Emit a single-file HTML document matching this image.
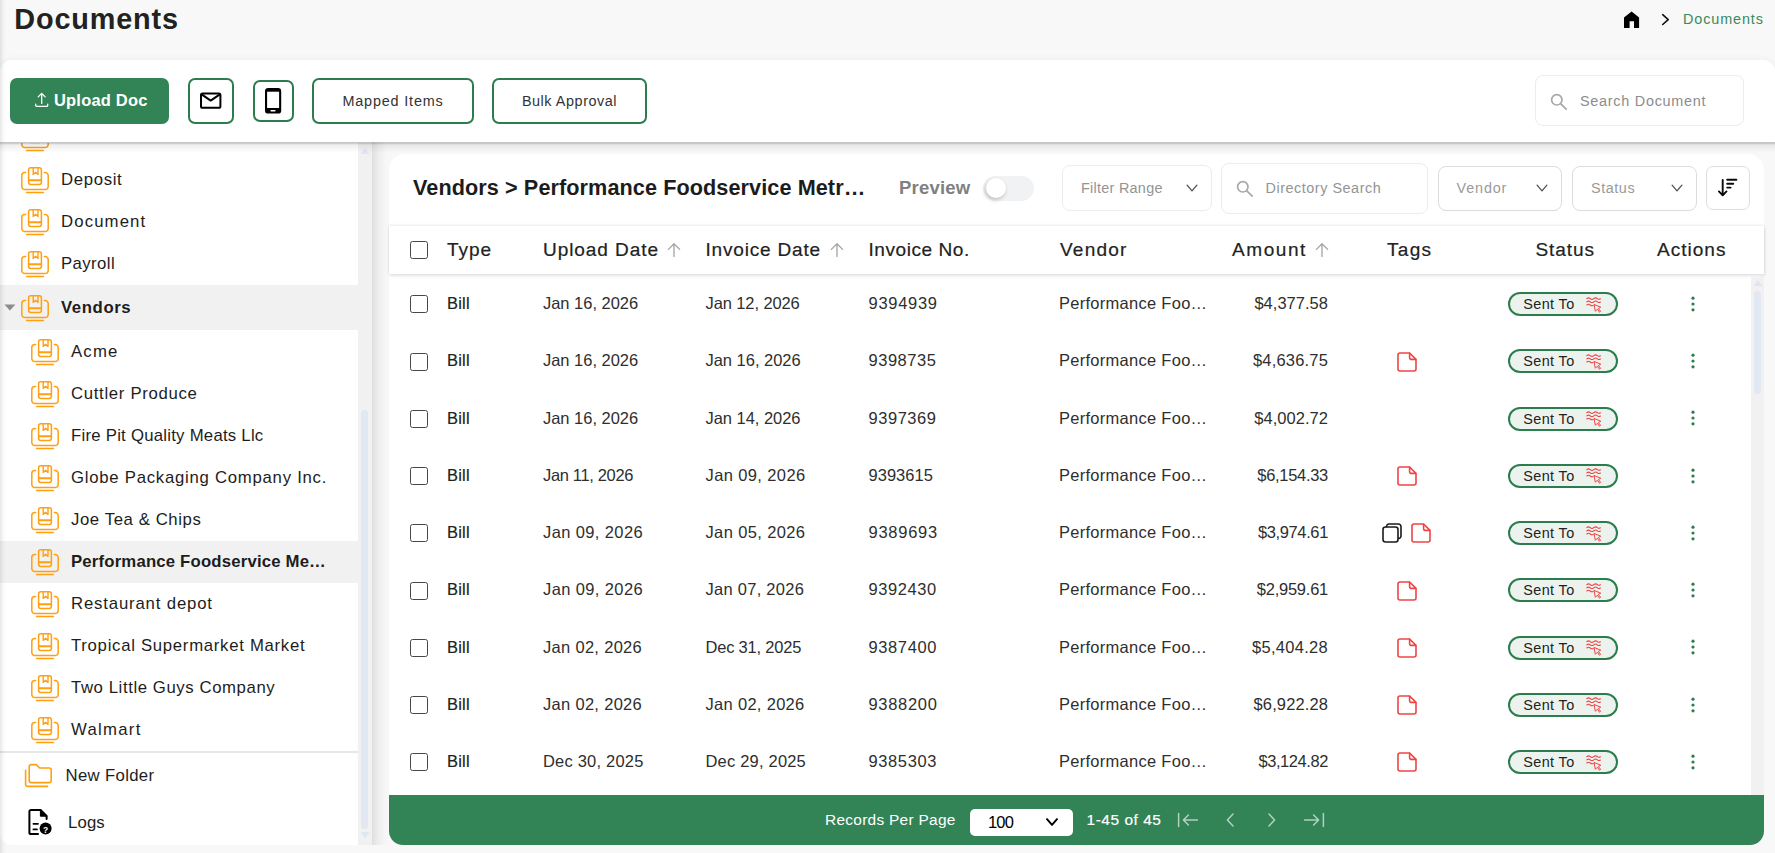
<!DOCTYPE html>
<html lang="en"><head>
<meta charset="utf-8">
<title>Documents</title>
<style>
*{box-sizing:border-box;margin:0;padding:0}
html,body{width:1775px;height:853px;overflow:hidden}
body{background:#f8f8f8;font-family:"Liberation Sans",sans-serif;color:#212121;position:relative}
.abs{position:absolute}
svg{overflow:visible}
.t{position:absolute;white-space:nowrap}
.x{display:inline-block;white-space:nowrap;vertical-align:top;line-height:inherit}
#toolbar{left:0;top:60px;width:1775px;height:82px;background:#fff;border-radius:12px 12px 0 0;box-shadow:0 -2px 6px rgba(0,0,0,.035)}
#upload{left:10px;top:78px;width:159px;height:46px;background:#328356;border-radius:7px}
.obtn{position:absolute;border:2px solid #2c7d4e;border-radius:7px;background:#fff}
.fbox{position:absolute;border:1px solid #e6e6e6;border-radius:8px;background:#fff}
#side{left:0;top:143px;width:358px;height:701.5px;background:#fff;overflow:hidden;border-radius:0 0 0 12px}
.hl{position:absolute;left:0;width:358px;background:#f1f1f1}
#panel{left:389px;top:153.5px;width:1375px;height:691px;background:#fff;border-radius:16px 16px 14px 14px}
#thead{left:389px;top:226px;width:1375px;height:48.3px;background:#fff;box-shadow:0 1.5px 3px .5px rgba(0,0,0,.12),0 -1px 2px 1px rgba(0,0,0,.035)}
#rows{left:0;top:277px;width:1775px;height:518px;overflow:hidden}
#rows>*{margin-top:-277px}
.cb{position:absolute;width:18px;height:18px;border:1.15px solid #474747;border-radius:2.5px;background:#fff}
.pill{position:absolute;width:110px;height:24px;border:2px solid #2c7d4e;border-radius:12px;background:#ecf3ee}
#footer{left:389px;top:795px;width:1375px;height:49.5px;background:#328356;border-radius:0 0 14px 14px}
</style>
</head>
<body>
<div class="t" style="top:-1.3px;height:40px;line-height:40px;left:14.3px;"><span class="x" style="font-size: 28.84px; font-weight: 700; color: rgb(34, 34, 34); letter-spacing: 0.84px;">Documents</span></div>
<svg class="abs" style="left:1622px;top:10px" width="18" height="18" viewBox="0 0 18 18"><path d="M9.6 1.5L2 7.6V17.9H7.6V11.2H12V17.9H17.1V7.6Z" fill="#000"></path></svg>
<svg class="abs" style="left:1658px;top:11px" width="14" height="16" viewBox="0 0 14 16" fill="none" stroke="#111" stroke-width="1.6" stroke-linecap="round" stroke-linejoin="round"><path d="M4.7 3.7L10.2 8.6L4.7 13.5"></path></svg>
<div class="t" style="top:4px;height:30px;line-height:30px;left:1683px;"><span class="x" style="font-size: 14.42px; font-weight: 400; color: rgb(58, 138, 92); letter-spacing: 0.88px;">Documents</span></div>
<div class="abs" id="toolbar"></div>
<div class="abs" id="upload"></div>
<svg class="abs" style="left:34px;top:92px" width="16" height="16" viewBox="0 0 16 16" fill="none" stroke="#fff" stroke-width="1.3" stroke-linecap="round" stroke-linejoin="round"><path d="M7.7 11.4V1.4M4.2 4.9L7.7 1.4L11.2 4.9M1.7 12.2V13.2A1.2 1.2 0 0 0 2.9 14.4H12.5A1.2 1.2 0 0 0 13.7 13.2V12.2"></path></svg>
<div class="t" style="top:84.9px;height:30px;line-height:30px;left:54px;"><span class="x" style="font-size: 16.48px; font-weight: 700; color: rgb(255, 255, 255); letter-spacing: 0.2px;">Upload Doc</span></div>
<div class="obtn" style="left:188px;top:78px;width:46px;height:46px"></div>
<svg class="abs" style="left:199px;top:91px" width="24" height="19" viewBox="0 0 24 19" fill="none" stroke="#000" stroke-width="2" stroke-linejoin="round" stroke-linecap="round"><rect x="2" y="2.4" width="19.4" height="14.4" rx="1.6"></rect><path d="M2.6 3.4L11.7 9.6L20.8 3.4"></path></svg>
<div class="obtn" style="left:253px;top:80px;width:41px;height:42px"></div>
<svg class="abs" style="left:265px;top:88px" width="17" height="26" viewBox="0 0 17 26"><rect x="0" y="0" width="16.2" height="25.6" rx="3.2" fill="#000"></rect><rect x="2.1" y="3.7" width="12" height="16.3" fill="#fff"></rect><rect x="5.4" y="22.000000000000004" width="5.2" height="1.5" rx=".7" fill="#fff"></rect></svg>
<div class="obtn" style="left:312px;top:78px;width:162px;height:46px"></div>
<div class="t" style="top:86px;height:30px;line-height:30px;left:243px;width:300px;text-align:center;"><span class="x" style="font-size: 14.42px; font-weight: 400; color: rgb(51, 51, 51); letter-spacing: 0.83px;">Mapped Items</span></div>
<div class="obtn" style="left:492px;top:78px;width:155px;height:46px"></div>
<div class="t" style="top:86px;height:30px;line-height:30px;left:419.5px;width:300px;text-align:center;"><span class="x" style="font-size: 14.42px; font-weight: 400; color: rgb(51, 51, 51); letter-spacing: 0.55px;">Bulk Approval</span></div>
<div class="fbox" style="left:1535px;top:75.3px;width:209px;height:51.2px;border-color:#ececec"></div>
<svg class="abs" style="left:1550px;top:93px" width="18" height="18" viewBox="0 0 18 18" fill="none" stroke="#a8a8a8" stroke-width="1.7" stroke-linecap="round"><circle cx="6.8" cy="6.8" r="5.2"></circle><path d="M10.8 10.8L16.2 16.2"></path></svg>
<div class="t" style="top:86px;height:30px;line-height:30px;left:1580px;"><span class="x" style="font-size: 14.42px; font-weight: 400; color: rgb(140, 140, 140); letter-spacing: 0.73px;">Search Document</span></div>
<div class="abs" id="side">
<svg class="abs" style="left:21px;top:-18.5px" width="28" height="27" viewBox="0 0 28 27" fill="none" stroke="#ffa012" stroke-width="1.5" stroke-linecap="round" stroke-linejoin="round">
<path d="M4.6 5.6H3.8A3 3 0 0 0 .8 8.600000000000001V19.6A3 3 0 0 0 3.8 22.6H24.2A3 3 0 0 0 27.2 19.6V8.6A3 3 0 0 0 24.2 5.6H23.4"></path>
<path d="M5.6 25.6H22.4"></path>
<rect x="7.6" y=".8" width="12.8" height="16.6" rx="2.2"></rect>
<path d="M8 13.2H20" stroke-width="2"></path>
<path d="M12.2 1V7.4L14.6 5.2L17 7.4V1" stroke-width="1.4"></path>
</svg>
<svg class="abs" style="left:21px;top:23.5px" width="28" height="27" viewBox="0 0 28 27" fill="none" stroke="#ffa012" stroke-width="1.5" stroke-linecap="round" stroke-linejoin="round">
<path d="M4.6 5.6H3.8A3 3 0 0 0 .8 8.600000000000001V19.6A3 3 0 0 0 3.8 22.6H24.2A3 3 0 0 0 27.2 19.6V8.6A3 3 0 0 0 24.2 5.6H23.4"></path>
<path d="M5.6 25.6H22.4"></path>
<rect x="7.6" y=".8" width="12.8" height="16.6" rx="2.2"></rect>
<path d="M8 13.2H20" stroke-width="2"></path>
<path d="M12.2 1V7.4L14.6 5.2L17 7.4V1" stroke-width="1.4"></path>
</svg><div class="t" style="top:21.5px;height:30px;line-height:30px;left:61px;"><span class="x" style="font-size: 16.74px; font-weight: 400; color: rgb(29, 29, 29); letter-spacing: 0.66px;">Deposit</span></div>
<svg class="abs" style="left:21px;top:65.5px" width="28" height="27" viewBox="0 0 28 27" fill="none" stroke="#ffa012" stroke-width="1.5" stroke-linecap="round" stroke-linejoin="round">
<path d="M4.6 5.6H3.8A3 3 0 0 0 .8 8.600000000000001V19.6A3 3 0 0 0 3.8 22.6H24.2A3 3 0 0 0 27.2 19.6V8.6A3 3 0 0 0 24.2 5.6H23.4"></path>
<path d="M5.6 25.6H22.4"></path>
<rect x="7.6" y=".8" width="12.8" height="16.6" rx="2.2"></rect>
<path d="M8 13.2H20" stroke-width="2"></path>
<path d="M12.2 1V7.4L14.6 5.2L17 7.4V1" stroke-width="1.4"></path>
</svg><div class="t" style="top:63.5px;height:30px;line-height:30px;left:61px;"><span class="x" style="font-size: 16.74px; font-weight: 400; color: rgb(29, 29, 29); letter-spacing: 1.13px;">Document</span></div>
<svg class="abs" style="left:21px;top:107.5px" width="28" height="27" viewBox="0 0 28 27" fill="none" stroke="#ffa012" stroke-width="1.5" stroke-linecap="round" stroke-linejoin="round">
<path d="M4.6 5.6H3.8A3 3 0 0 0 .8 8.600000000000001V19.6A3 3 0 0 0 3.8 22.6H24.2A3 3 0 0 0 27.2 19.6V8.6A3 3 0 0 0 24.2 5.6H23.4"></path>
<path d="M5.6 25.6H22.4"></path>
<rect x="7.6" y=".8" width="12.8" height="16.6" rx="2.2"></rect>
<path d="M8 13.2H20" stroke-width="2"></path>
<path d="M12.2 1V7.4L14.6 5.2L17 7.4V1" stroke-width="1.4"></path>
</svg><div class="t" style="top:105.5px;height:30px;line-height:30px;left:61px;"><span class="x" style="font-size: 16.74px; font-weight: 400; color: rgb(29, 29, 29); letter-spacing: 0.41px;">Payroll</span></div>
<div class="hl" style="top:141.95px;height:45.5px"></div><svg class="abs" style="left:21px;top:151.7px" width="28" height="27" viewBox="0 0 28 27" fill="none" stroke="#ffa012" stroke-width="1.5" stroke-linecap="round" stroke-linejoin="round">
<path d="M4.6 5.6H3.8A3 3 0 0 0 .8 8.600000000000001V19.6A3 3 0 0 0 3.8 22.6H24.2A3 3 0 0 0 27.2 19.6V8.6A3 3 0 0 0 24.2 5.6H23.4"></path>
<path d="M5.6 25.6H22.4"></path>
<rect x="7.6" y=".8" width="12.8" height="16.6" rx="2.2"></rect>
<path d="M8 13.2H20" stroke-width="2"></path>
<path d="M12.2 1V7.4L14.6 5.2L17 7.4V1" stroke-width="1.4"></path>
</svg><div class="t" style="top:149.7px;height:30px;line-height:30px;left:61px;"><span class="x" style="font-size: 16.74px; font-weight: 700; color: rgb(29, 29, 29); letter-spacing: 0.6px;">Vendors</span></div>
<svg class="abs" style="left:4px;top:161.4px" width="12" height="8" viewBox="0 0 12 8"><path d="M.4 .6H11.4L5.9 6.6Z" fill="#8c8c8c"></path></svg>
<svg class="abs" style="left:31px;top:195.5px" width="28" height="27" viewBox="0 0 28 27" fill="none" stroke="#ffa012" stroke-width="1.5" stroke-linecap="round" stroke-linejoin="round">
<path d="M4.6 5.6H3.8A3 3 0 0 0 .8 8.600000000000001V19.6A3 3 0 0 0 3.8 22.6H24.2A3 3 0 0 0 27.2 19.6V8.6A3 3 0 0 0 24.2 5.6H23.4"></path>
<path d="M5.6 25.6H22.4"></path>
<rect x="7.6" y=".8" width="12.8" height="16.6" rx="2.2"></rect>
<path d="M8 13.2H20" stroke-width="2"></path>
<path d="M12.2 1V7.4L14.6 5.2L17 7.4V1" stroke-width="1.4"></path>
</svg><div class="t" style="top:193.5px;height:30px;line-height:30px;left:71px;"><span class="x" style="font-size: 16.74px; font-weight: 400; color: rgb(29, 29, 29); letter-spacing: 1.21px;">Acme</span></div>
<svg class="abs" style="left:31px;top:237.5px" width="28" height="27" viewBox="0 0 28 27" fill="none" stroke="#ffa012" stroke-width="1.5" stroke-linecap="round" stroke-linejoin="round">
<path d="M4.6 5.6H3.8A3 3 0 0 0 .8 8.600000000000001V19.6A3 3 0 0 0 3.8 22.6H24.2A3 3 0 0 0 27.2 19.6V8.6A3 3 0 0 0 24.2 5.6H23.4"></path>
<path d="M5.6 25.6H22.4"></path>
<rect x="7.6" y=".8" width="12.8" height="16.6" rx="2.2"></rect>
<path d="M8 13.2H20" stroke-width="2"></path>
<path d="M12.2 1V7.4L14.6 5.2L17 7.4V1" stroke-width="1.4"></path>
</svg><div class="t" style="top:235.5px;height:30px;line-height:30px;left:71px;"><span class="x" style="font-size: 16.74px; font-weight: 400; color: rgb(29, 29, 29); letter-spacing: 0.68px;">Cuttler Produce</span></div>
<svg class="abs" style="left:31px;top:279.5px" width="28" height="27" viewBox="0 0 28 27" fill="none" stroke="#ffa012" stroke-width="1.5" stroke-linecap="round" stroke-linejoin="round">
<path d="M4.6 5.6H3.8A3 3 0 0 0 .8 8.600000000000001V19.6A3 3 0 0 0 3.8 22.6H24.2A3 3 0 0 0 27.2 19.6V8.6A3 3 0 0 0 24.2 5.6H23.4"></path>
<path d="M5.6 25.6H22.4"></path>
<rect x="7.6" y=".8" width="12.8" height="16.6" rx="2.2"></rect>
<path d="M8 13.2H20" stroke-width="2"></path>
<path d="M12.2 1V7.4L14.6 5.2L17 7.4V1" stroke-width="1.4"></path>
</svg><div class="t" style="top:277.5px;height:30px;line-height:30px;left:71px;"><span class="x" style="font-size: 16.74px; font-weight: 400; color: rgb(29, 29, 29); letter-spacing: 0.25px;">Fire Pit Quality Meats Llc</span></div>
<svg class="abs" style="left:31px;top:321.5px" width="28" height="27" viewBox="0 0 28 27" fill="none" stroke="#ffa012" stroke-width="1.5" stroke-linecap="round" stroke-linejoin="round">
<path d="M4.6 5.6H3.8A3 3 0 0 0 .8 8.600000000000001V19.6A3 3 0 0 0 3.8 22.6H24.2A3 3 0 0 0 27.2 19.6V8.6A3 3 0 0 0 24.2 5.6H23.4"></path>
<path d="M5.6 25.6H22.4"></path>
<rect x="7.6" y=".8" width="12.8" height="16.6" rx="2.2"></rect>
<path d="M8 13.2H20" stroke-width="2"></path>
<path d="M12.2 1V7.4L14.6 5.2L17 7.4V1" stroke-width="1.4"></path>
</svg><div class="t" style="top:319.5px;height:30px;line-height:30px;left:71px;"><span class="x" style="font-size: 16.74px; font-weight: 400; color: rgb(29, 29, 29); letter-spacing: 0.74px;">Globe Packaging Company Inc.</span></div>
<svg class="abs" style="left:31px;top:363.5px" width="28" height="27" viewBox="0 0 28 27" fill="none" stroke="#ffa012" stroke-width="1.5" stroke-linecap="round" stroke-linejoin="round">
<path d="M4.6 5.6H3.8A3 3 0 0 0 .8 8.600000000000001V19.6A3 3 0 0 0 3.8 22.6H24.2A3 3 0 0 0 27.2 19.6V8.6A3 3 0 0 0 24.2 5.6H23.4"></path>
<path d="M5.6 25.6H22.4"></path>
<rect x="7.6" y=".8" width="12.8" height="16.6" rx="2.2"></rect>
<path d="M8 13.2H20" stroke-width="2"></path>
<path d="M12.2 1V7.4L14.6 5.2L17 7.4V1" stroke-width="1.4"></path>
</svg><div class="t" style="top:361.5px;height:30px;line-height:30px;left:71px;"><span class="x" style="font-size: 16.74px; font-weight: 400; color: rgb(29, 29, 29); letter-spacing: 0.59px;">Joe Tea &amp; Chips</span></div>
<div class="hl" style="top:397.5px;height:42px"></div><svg class="abs" style="left:31px;top:405.5px" width="28" height="27" viewBox="0 0 28 27" fill="none" stroke="#ffa012" stroke-width="1.5" stroke-linecap="round" stroke-linejoin="round">
<path d="M4.6 5.6H3.8A3 3 0 0 0 .8 8.600000000000001V19.6A3 3 0 0 0 3.8 22.6H24.2A3 3 0 0 0 27.2 19.6V8.6A3 3 0 0 0 24.2 5.6H23.4"></path>
<path d="M5.6 25.6H22.4"></path>
<rect x="7.6" y=".8" width="12.8" height="16.6" rx="2.2"></rect>
<path d="M8 13.2H20" stroke-width="2"></path>
<path d="M12.2 1V7.4L14.6 5.2L17 7.4V1" stroke-width="1.4"></path>
</svg><div class="t" style="top:403.5px;height:30px;line-height:30px;left:71px;"><span class="x" style="font-size: 16.74px; font-weight: 700; color: rgb(29, 29, 29); letter-spacing: 0.18px;">Performance Foodservice Me…</span></div>
<svg class="abs" style="left:31px;top:447.5px" width="28" height="27" viewBox="0 0 28 27" fill="none" stroke="#ffa012" stroke-width="1.5" stroke-linecap="round" stroke-linejoin="round">
<path d="M4.6 5.6H3.8A3 3 0 0 0 .8 8.600000000000001V19.6A3 3 0 0 0 3.8 22.6H24.2A3 3 0 0 0 27.2 19.6V8.6A3 3 0 0 0 24.2 5.6H23.4"></path>
<path d="M5.6 25.6H22.4"></path>
<rect x="7.6" y=".8" width="12.8" height="16.6" rx="2.2"></rect>
<path d="M8 13.2H20" stroke-width="2"></path>
<path d="M12.2 1V7.4L14.6 5.2L17 7.4V1" stroke-width="1.4"></path>
</svg><div class="t" style="top:445.5px;height:30px;line-height:30px;left:71px;"><span class="x" style="font-size: 16.74px; font-weight: 400; color: rgb(29, 29, 29); letter-spacing: 0.84px;">Restaurant depot</span></div>
<svg class="abs" style="left:31px;top:489.5px" width="28" height="27" viewBox="0 0 28 27" fill="none" stroke="#ffa012" stroke-width="1.5" stroke-linecap="round" stroke-linejoin="round">
<path d="M4.6 5.6H3.8A3 3 0 0 0 .8 8.600000000000001V19.6A3 3 0 0 0 3.8 22.6H24.2A3 3 0 0 0 27.2 19.6V8.6A3 3 0 0 0 24.2 5.6H23.4"></path>
<path d="M5.6 25.6H22.4"></path>
<rect x="7.6" y=".8" width="12.8" height="16.6" rx="2.2"></rect>
<path d="M8 13.2H20" stroke-width="2"></path>
<path d="M12.2 1V7.4L14.6 5.2L17 7.4V1" stroke-width="1.4"></path>
</svg><div class="t" style="top:487.5px;height:30px;line-height:30px;left:71px;"><span class="x" style="font-size: 16.74px; font-weight: 400; color: rgb(29, 29, 29); letter-spacing: 0.71px;">Tropical Supermarket Market</span></div>
<svg class="abs" style="left:31px;top:531.5px" width="28" height="27" viewBox="0 0 28 27" fill="none" stroke="#ffa012" stroke-width="1.5" stroke-linecap="round" stroke-linejoin="round">
<path d="M4.6 5.6H3.8A3 3 0 0 0 .8 8.600000000000001V19.6A3 3 0 0 0 3.8 22.6H24.2A3 3 0 0 0 27.2 19.6V8.6A3 3 0 0 0 24.2 5.6H23.4"></path>
<path d="M5.6 25.6H22.4"></path>
<rect x="7.6" y=".8" width="12.8" height="16.6" rx="2.2"></rect>
<path d="M8 13.2H20" stroke-width="2"></path>
<path d="M12.2 1V7.4L14.6 5.2L17 7.4V1" stroke-width="1.4"></path>
</svg><div class="t" style="top:529.5px;height:30px;line-height:30px;left:71px;"><span class="x" style="font-size: 16.74px; font-weight: 400; color: rgb(29, 29, 29); letter-spacing: 0.59px;">Two Little Guys Company</span></div>
<svg class="abs" style="left:31px;top:573.5px" width="28" height="27" viewBox="0 0 28 27" fill="none" stroke="#ffa012" stroke-width="1.5" stroke-linecap="round" stroke-linejoin="round">
<path d="M4.6 5.6H3.8A3 3 0 0 0 .8 8.600000000000001V19.6A3 3 0 0 0 3.8 22.6H24.2A3 3 0 0 0 27.2 19.6V8.6A3 3 0 0 0 24.2 5.6H23.4"></path>
<path d="M5.6 25.6H22.4"></path>
<rect x="7.6" y=".8" width="12.8" height="16.6" rx="2.2"></rect>
<path d="M8 13.2H20" stroke-width="2"></path>
<path d="M12.2 1V7.4L14.6 5.2L17 7.4V1" stroke-width="1.4"></path>
</svg><div class="t" style="top:571.5px;height:30px;line-height:30px;left:71px;"><span class="x" style="font-size: 16.74px; font-weight: 400; color: rgb(29, 29, 29); letter-spacing: 1.27px;">Walmart</span></div>
<div class="abs" style="left:0;top:608px;width:358px;height:2px;background:#e6e6e6"></div>
<svg class="abs" style="left:24px;top:620px" width="29" height="25" viewBox="0 0 29 25" fill="none" stroke="#ffa012" stroke-width="1.6" stroke-linecap="round" stroke-linejoin="round"><path d="M7.2 1.6H12.4L15.6 5H25.2A2 2 0 0 1 27.2 7V17.6A2 2 0 0 1 25.2 19.6H7.2A2 2 0 0 1 5.2 17.6V3.6A2 2 0 0 1 7.2 1.6Z"></path><path d="M1.6 7.4V21.4A2 2 0 0 0 3.6 23.4H23.6"></path></svg>
<div class="t" style="top:618.3px;height:30px;line-height:30px;left:65.5px;"><span class="x" style="font-size: 16.74px; font-weight: 400; color: rgb(29, 29, 29); letter-spacing: 0.33px;">New Folder</span></div>
<svg class="abs" style="left:27px;top:665px" width="27" height="28" viewBox="0 0 27 28" fill="none" stroke="#000" stroke-width="2" stroke-linecap="round" stroke-linejoin="round"><path d="M11 26H4A1.6 1.6 0 0 1 2.4 24.4V3.6A1.6 1.6 0 0 1 4 2H13.6L19.6 8V11"></path><path d="M13.4 2.2V8.2H19.4Z" fill="#000" stroke-width="1"></path><path d="M6.4 15.8H11M6.4 21.4H10" stroke-width="1.7"></path><circle cx="18.6" cy="20.4" r="6" fill="#000" stroke="none"></circle></svg>
<div class="t" style="left:41.6px;top:676.4px;height:18px;line-height:18px;width:8px;text-align:center"><span style="font-size:8.5px;font-weight:700;color:#fff">?</span></div>
<div class="t" style="top:664.6px;height:30px;line-height:30px;left:68px;"><span class="x" style="font-size: 16.74px; font-weight: 400; color: rgb(29, 29, 29); letter-spacing: 0.15px;">Logs</span></div>
</div>
<div class="abs" style="left:358px;top:142px;width:13.5px;height:702.5px;background:#f1f1f2"></div>
<div class="abs" style="left:361px;top:410px;width:7px;height:419px;border-radius:4px;background:#e2e8f1"></div>
<svg class="abs" style="left:360px;top:147px" width="10" height="8" viewBox="0 0 10 8"><path d="M5 1L9.4 7H.6Z" fill="#dfe6f1"></path></svg>
<svg class="abs" style="left:360px;top:831px" width="10" height="8" viewBox="0 0 10 8"><path d="M5 7L9.4 1H.6Z" fill="#dfe6f1"></path></svg>
<div class="abs" style="left:371.5px;top:142px;width:17.5px;height:702.5px;background:linear-gradient(90deg,#dfdfdf,#ededed 35%,#f5f5f5 70%,#f8f8f8)"></div>
<div class="abs" style="left:0;top:142px;width:1775px;height:11px;background:linear-gradient(180deg,rgba(0,0,0,.2),rgba(0,0,0,.19) 17%,rgba(0,0,0,.065) 25%,rgba(0,0,0,.03) 65%,rgba(0,0,0,0))"></div>
<div class="abs" id="panel"></div>
<div class="t" style="top:170.5px;height:34px;line-height:34px;left:413px;"><span class="x" style="font-size: 21.63px; font-weight: 700; color: rgb(28, 28, 28); letter-spacing: 0.09px;">Vendors &gt; Performance Foodservice Metr…</span></div>
<div class="t" style="top:172.5px;height:30px;line-height:30px;left:899px;"><span class="x" style="font-size: 18.54px; font-weight: 700; color: rgb(128, 128, 128); letter-spacing: 0.19px;">Preview</span></div>
<div class="abs" style="left:982.5px;top:176px;width:51px;height:24.5px;border-radius:13px;background:#f0f2f4"></div>
<div class="abs" style="left:986px;top:178.2px;width:20px;height:20px;border-radius:10px;background:#fff;box-shadow:-1px 2px 4px rgba(0,0,0,.22)"></div>
<div class="fbox" style="left:1062px;top:165px;width:150px;height:46px;border-color:#ececec"></div>
<div class="t" style="top:173px;height:30px;line-height:30px;left:1081px;"><span class="x" style="font-size: 14.42px; font-weight: 400; color: rgb(148, 148, 148); letter-spacing: 0.27px;">Filter Range</span></div>
<svg class="abs" style="left:1184.3px;top:180.3px" width="16" height="16" viewBox="-8 -8 16 16" fill="none" stroke="#555" stroke-width="1.35" stroke-linecap="round" stroke-linejoin="round"><path d="M-4.9 -2.842L0 2.842L4.9 -2.842"></path></svg>
<div class="fbox" style="left:1221px;top:162.5px;width:206.5px;height:51.5px;border-color:#ececec"></div>
<svg class="abs" style="left:1235.5px;top:179.5px" width="18" height="18" viewBox="0 0 18 18" fill="none" stroke="#a8a8a8" stroke-width="1.7" stroke-linecap="round"><circle cx="6.8" cy="6.8" r="5.2"></circle><path d="M10.8 10.8L16.2 16.2"></path></svg>
<div class="t" style="top:173px;height:30px;line-height:30px;left:1265.5px;"><span class="x" style="font-size: 14.42px; font-weight: 400; color: rgb(148, 148, 148); letter-spacing: 0.53px;">Directory Search</span></div>
<div class="fbox" style="left:1437.5px;top:165.5px;width:124.5px;height:45px;border-color:#dcdcdc"></div>
<div class="t" style="top:173px;height:30px;line-height:30px;left:1456.5px;"><span class="x" style="font-size: 14.42px; font-weight: 400; color: rgb(154, 154, 154); letter-spacing: 0.85px;">Vendor</span></div>
<svg class="abs" style="left:1534.3px;top:180.3px" width="16" height="16" viewBox="-8 -8 16 16" fill="none" stroke="#555" stroke-width="1.35" stroke-linecap="round" stroke-linejoin="round"><path d="M-4.9 -2.842L0 2.842L4.9 -2.842"></path></svg>
<div class="fbox" style="left:1572px;top:165.5px;width:125px;height:45px;border-color:#dcdcdc"></div>
<div class="t" style="top:173px;height:30px;line-height:30px;left:1591px;"><span class="x" style="font-size: 14.42px; font-weight: 400; color: rgb(154, 154, 154); letter-spacing: 0.55px;">Status</span></div>
<svg class="abs" style="left:1669.4px;top:180.3px" width="16" height="16" viewBox="-8 -8 16 16" fill="none" stroke="#555" stroke-width="1.35" stroke-linecap="round" stroke-linejoin="round"><path d="M-4.9 -2.842L0 2.842L4.9 -2.842"></path></svg>
<div class="fbox" style="left:1705.5px;top:166px;width:44.5px;height:44px;border-color:#dedede;border-radius:7px"></div>
<svg class="abs" style="left:1716px;top:177px" width="24" height="21" viewBox="0 0 24 21" fill="none" stroke="#0a0a0a" stroke-width="1.9" stroke-linecap="round" stroke-linejoin="round"><path d="M6.7 3V18M2.9 14.4L6.7 18.3L10.5 14.4M11.2 2.8H20.4M11.2 6.7H17.2M11.2 10.6H14.6"></path></svg>
<div class="abs" id="thead"></div>
<div class="cb" style="left:410px;top:241px"></div>
<div class="t" style="top:235px;height:30px;line-height:30px;left:447px;"><span class="x" style="font-size: 19.06px; font-weight: 400; color: rgb(34, 34, 34); -webkit-text-stroke: 0.2px; letter-spacing: 0.97px;">Type</span></div>
<div class="t" style="top:235px;height:30px;line-height:30px;left:543px;"><span class="x" style="font-size: 19.06px; font-weight: 400; color: rgb(34, 34, 34); -webkit-text-stroke: 0.2px; letter-spacing: 0.91px;">Upload Date</span></div>
<svg class="abs" style="left:665.5px;top:242.3px" width="16" height="16" viewBox="-8 -8 16 16" fill="none" stroke="#a4a4a4" stroke-width="1.3" stroke-linecap="round" stroke-linejoin="round"><path d="M0 6.4V-6.2M-5.6 -.6L0 -6.2L5.6 -.6"></path></svg>
<div class="t" style="top:235px;height:30px;line-height:30px;left:705.5px;"><span class="x" style="font-size: 19.06px; font-weight: 400; color: rgb(34, 34, 34); -webkit-text-stroke: 0.2px; letter-spacing: 0.8px;">Invoice Date</span></div>
<svg class="abs" style="left:828.5px;top:242.3px" width="16" height="16" viewBox="-8 -8 16 16" fill="none" stroke="#a4a4a4" stroke-width="1.3" stroke-linecap="round" stroke-linejoin="round"><path d="M0 6.4V-6.2M-5.6 -.6L0 -6.2L5.6 -.6"></path></svg>
<div class="t" style="top:235px;height:30px;line-height:30px;left:868.5px;"><span class="x" style="font-size: 19.06px; font-weight: 400; color: rgb(34, 34, 34); -webkit-text-stroke: 0.2px; letter-spacing: 0.54px;">Invoice No.</span></div>
<div class="t" style="top:235px;height:30px;line-height:30px;left:1060px;"><span class="x" style="font-size: 19.06px; font-weight: 400; color: rgb(34, 34, 34); -webkit-text-stroke: 0.2px; letter-spacing: 1.22px;">Vendor</span></div>
<div class="t" style="top:235px;height:30px;line-height:30px;left:1232px;"><span class="x" style="font-size: 19.06px; font-weight: 400; color: rgb(34, 34, 34); -webkit-text-stroke: 0.2px; letter-spacing: 1.53px;">Amount</span></div>
<svg class="abs" style="left:1313.5px;top:242.3px" width="16" height="16" viewBox="-8 -8 16 16" fill="none" stroke="#a4a4a4" stroke-width="1.3" stroke-linecap="round" stroke-linejoin="round"><path d="M0 6.4V-6.2M-5.6 -.6L0 -6.2L5.6 -.6"></path></svg>
<div class="t" style="top:235px;height:30px;line-height:30px;left:1387px;"><span class="x" style="font-size: 19.06px; font-weight: 400; color: rgb(34, 34, 34); -webkit-text-stroke: 0.2px; letter-spacing: 1.29px;">Tags</span></div>
<div class="t" style="top:235px;height:30px;line-height:30px;left:1535.5px;"><span class="x" style="font-size: 19.06px; font-weight: 400; color: rgb(34, 34, 34); -webkit-text-stroke: 0.2px; letter-spacing: 0.9px;">Status</span></div>
<div class="t" style="top:235px;height:30px;line-height:30px;left:1657px;"><span class="x" style="font-size: 19.06px; font-weight: 400; color: rgb(34, 34, 34); -webkit-text-stroke: 0.2px; letter-spacing: 1px;">Actions</span></div>
<div class="abs" id="rows">
<div class="cb" style="left:410px;top:295px"></div>
<div class="t" style="top:288.1px;height:30px;line-height:30px;left:447px;"><span class="x" style="font-size: 16.48px; font-weight: 400; color: rgb(34, 34, 34); -webkit-text-stroke: 0.2px; letter-spacing: 0.2px;">Bill</span></div>
<div class="t" style="top:288.1px;height:30px;line-height:30px;left:543px;"><span class="x" style="font-size: 16.48px; font-weight: 400; color: rgb(46, 46, 46); letter-spacing: -0.01px;">Jan 16, 2026</span></div>
<div class="t" style="top:288.1px;height:30px;line-height:30px;left:705.5px;"><span class="x" style="font-size: 16.48px; font-weight: 400; color: rgb(46, 46, 46); letter-spacing: -0.09px;">Jan 12, 2026</span></div>
<div class="t" style="top:288.1px;height:30px;line-height:30px;left:868.5px;"><span class="x" style="font-size: 16.48px; font-weight: 400; color: rgb(46, 46, 46); letter-spacing: 0.73px;">9394939</span></div>
<div class="t" style="top:288.1px;height:30px;line-height:30px;left:1059px;"><span class="x" style="font-size: 16.48px; font-weight: 400; color: rgb(46, 46, 46); letter-spacing: 0.29px;">Performance Foo…</span></div>
<div class="t" style="top:288.1px;height:30px;line-height:30px;right:447px;"><span class="x" style="font-size: 16.48px; font-weight: 400; color: rgb(46, 46, 46); letter-spacing: 0.04px;">$4,377.58</span></div>
<div class="pill" style="left:1508px;top:292px"></div>
<div class="t" style="top:289px;height:30px;line-height:30px;left:1523.3px;"><span class="x" style="font-size: 14.42px; font-weight: 400; color: rgb(34, 34, 34); letter-spacing: 0.38px;">Sent To</span></div>
<svg class="abs" style="left:1586px;top:296.7px" width="16" height="16" viewBox="0 0 16 16" fill="none" stroke="#ef4444" stroke-width="1.1" stroke-linecap="round" stroke-linejoin="round">
<path d="M.8 1.6C2 .6 3 .6 4.2 1.6S6.6 2.6 7.8 1.6S10.200000000000001 .6 11.4 1.6S13.6 2.4 14.4 1.8"></path>
<path d="M.8 4.8C2 3.8 3 3.8 4.2 4.8S6.6 5.8 7.8 4.8S10.200000000000001 3.8 11.4 4.8S13.6 5.6 14.4 5"></path>
<path d="M.8 8C2 7 3 7 4.2 8S6.2 8.9 7.2 8.4"></path>
<path d="M8.4 7.6L14.8 10.200000000000001L12.4 11.4L14.600000000000001 14.4L13.4 15.200000000000001L11.4 12.2L9.6 14Z" stroke-width="1"></path>
</svg>
<svg class="abs" style="left:1689px;top:293.9px" width="8" height="20" viewBox="0 0 8 20" fill="#2c7d4e"><circle cx="4" cy="4.2" r="1.6"></circle><circle cx="4" cy="10" r="1.6"></circle><circle cx="4" cy="15.8" r="1.6"></circle></svg>
<div class="cb" style="left:410px;top:353px"></div>
<div class="t" style="top:345.35px;height:30px;line-height:30px;left:447px;"><span class="x" style="font-size: 16.48px; font-weight: 400; color: rgb(34, 34, 34); -webkit-text-stroke: 0.2px; letter-spacing: 0.2px;">Bill</span></div>
<div class="t" style="top:345.35px;height:30px;line-height:30px;left:543px;"><span class="x" style="font-size: 16.48px; font-weight: 400; color: rgb(46, 46, 46); letter-spacing: -0.01px;">Jan 16, 2026</span></div>
<div class="t" style="top:345.35px;height:30px;line-height:30px;left:705.5px;"><span class="x" style="font-size: 16.48px; font-weight: 400; color: rgb(46, 46, 46); letter-spacing: -0.01px;">Jan 16, 2026</span></div>
<div class="t" style="top:345.35px;height:30px;line-height:30px;left:868.5px;"><span class="x" style="font-size: 16.48px; font-weight: 400; color: rgb(46, 46, 46); letter-spacing: 0.54px;">9398735</span></div>
<div class="t" style="top:345.35px;height:30px;line-height:30px;left:1059px;"><span class="x" style="font-size: 16.48px; font-weight: 400; color: rgb(46, 46, 46); letter-spacing: 0.29px;">Performance Foo…</span></div>
<div class="t" style="top:345.35px;height:30px;line-height:30px;right:447px;"><span class="x" style="font-size: 16.48px; font-weight: 400; color: rgb(46, 46, 46); letter-spacing: 0.2px;">$4,636.75</span></div>
<svg class="abs" style="left:1396.5px;top:351.65px" width="20" height="20" viewBox="0 0 20 20" fill="none" stroke="#ef4444" stroke-width="1.6" stroke-linejoin="round" stroke-linecap="round">
<path d="M3 1H12.6L19 7.4V17A2 2 0 0 1 17 19H3A2 2 0 0 1 1 17V3A2 2 0 0 1 3 1Z"></path><path d="M12.6 1.4V5.4A2 2 0 0 0 14.6 7.4H18.6"></path></svg>
<div class="pill" style="left:1508px;top:349px"></div>
<div class="t" style="top:346.25px;height:30px;line-height:30px;left:1523.3px;"><span class="x" style="font-size: 14.42px; font-weight: 400; color: rgb(34, 34, 34); letter-spacing: 0.38px;">Sent To</span></div>
<svg class="abs" style="left:1586px;top:353.95px" width="16" height="16" viewBox="0 0 16 16" fill="none" stroke="#ef4444" stroke-width="1.1" stroke-linecap="round" stroke-linejoin="round">
<path d="M.8 1.6C2 .6 3 .6 4.2 1.6S6.6 2.6 7.8 1.6S10.200000000000001 .6 11.4 1.6S13.6 2.4 14.4 1.8"></path>
<path d="M.8 4.8C2 3.8 3 3.8 4.2 4.8S6.6 5.8 7.8 4.8S10.200000000000001 3.8 11.4 4.8S13.6 5.6 14.4 5"></path>
<path d="M.8 8C2 7 3 7 4.2 8S6.2 8.9 7.2 8.4"></path>
<path d="M8.4 7.6L14.8 10.200000000000001L12.4 11.4L14.600000000000001 14.4L13.4 15.200000000000001L11.4 12.2L9.6 14Z" stroke-width="1"></path>
</svg>
<svg class="abs" style="left:1689px;top:351.15px" width="8" height="20" viewBox="0 0 8 20" fill="#2c7d4e"><circle cx="4" cy="4.2" r="1.6"></circle><circle cx="4" cy="10" r="1.6"></circle><circle cx="4" cy="15.8" r="1.6"></circle></svg>
<div class="cb" style="left:410px;top:410px"></div>
<div class="t" style="top:402.6px;height:30px;line-height:30px;left:447px;"><span class="x" style="font-size: 16.48px; font-weight: 400; color: rgb(34, 34, 34); -webkit-text-stroke: 0.2px; letter-spacing: 0.2px;">Bill</span></div>
<div class="t" style="top:402.6px;height:30px;line-height:30px;left:543px;"><span class="x" style="font-size: 16.48px; font-weight: 400; color: rgb(46, 46, 46); letter-spacing: -0.01px;">Jan 16, 2026</span></div>
<div class="t" style="top:402.6px;height:30px;line-height:30px;left:705.5px;"><span class="x" style="font-size: 16.48px; font-weight: 400; color: rgb(46, 46, 46); letter-spacing: -0.02px;">Jan 14, 2026</span></div>
<div class="t" style="top:402.6px;height:30px;line-height:30px;left:868.5px;"><span class="x" style="font-size: 16.48px; font-weight: 400; color: rgb(46, 46, 46); letter-spacing: 0.55px;">9397369</span></div>
<div class="t" style="top:402.6px;height:30px;line-height:30px;left:1059px;"><span class="x" style="font-size: 16.48px; font-weight: 400; color: rgb(46, 46, 46); letter-spacing: 0.29px;">Performance Foo…</span></div>
<div class="t" style="top:402.6px;height:30px;line-height:30px;right:447px;"><span class="x" style="font-size: 16.48px; font-weight: 400; color: rgb(46, 46, 46); letter-spacing: 0.06px;">$4,002.72</span></div>
<div class="pill" style="left:1508px;top:407px"></div>
<div class="t" style="top:403.5px;height:30px;line-height:30px;left:1523.3px;"><span class="x" style="font-size: 14.42px; font-weight: 400; color: rgb(34, 34, 34); letter-spacing: 0.38px;">Sent To</span></div>
<svg class="abs" style="left:1586px;top:411.2px" width="16" height="16" viewBox="0 0 16 16" fill="none" stroke="#ef4444" stroke-width="1.1" stroke-linecap="round" stroke-linejoin="round">
<path d="M.8 1.6C2 .6 3 .6 4.2 1.6S6.6 2.6 7.8 1.6S10.200000000000001 .6 11.4 1.6S13.6 2.4 14.4 1.8"></path>
<path d="M.8 4.8C2 3.8 3 3.8 4.2 4.8S6.6 5.8 7.8 4.8S10.200000000000001 3.8 11.4 4.8S13.6 5.6 14.4 5"></path>
<path d="M.8 8C2 7 3 7 4.2 8S6.2 8.9 7.2 8.4"></path>
<path d="M8.4 7.6L14.8 10.200000000000001L12.4 11.4L14.600000000000001 14.4L13.4 15.200000000000001L11.4 12.2L9.6 14Z" stroke-width="1"></path>
</svg>
<svg class="abs" style="left:1689px;top:408.4px" width="8" height="20" viewBox="0 0 8 20" fill="#2c7d4e"><circle cx="4" cy="4.2" r="1.6"></circle><circle cx="4" cy="10" r="1.6"></circle><circle cx="4" cy="15.8" r="1.6"></circle></svg>
<div class="cb" style="left:410px;top:467px"></div>
<div class="t" style="top:459.85px;height:30px;line-height:30px;left:447px;"><span class="x" style="font-size: 16.48px; font-weight: 400; color: rgb(34, 34, 34); -webkit-text-stroke: 0.2px; letter-spacing: 0.2px;">Bill</span></div>
<div class="t" style="top:459.85px;height:30px;line-height:30px;left:543px;"><span class="x" style="font-size: 16.48px; font-weight: 400; color: rgb(46, 46, 46); letter-spacing: -0.33px;">Jan 11, 2026</span></div>
<div class="t" style="top:459.85px;height:30px;line-height:30px;left:705.5px;"><span class="x" style="font-size: 16.48px; font-weight: 400; color: rgb(46, 46, 46); letter-spacing: 0.4px;">Jan 09, 2026</span></div>
<div class="t" style="top:459.85px;height:30px;line-height:30px;left:868.5px;"><span class="x" style="font-size: 16.48px; font-weight: 400; color: rgb(46, 46, 46); letter-spacing: 0.03px;">9393615</span></div>
<div class="t" style="top:459.85px;height:30px;line-height:30px;left:1059px;"><span class="x" style="font-size: 16.48px; font-weight: 400; color: rgb(46, 46, 46); letter-spacing: 0.29px;">Performance Foo…</span></div>
<div class="t" style="top:459.85px;height:30px;line-height:30px;right:447px;"><span class="x" style="font-size: 16.48px; font-weight: 400; color: rgb(46, 46, 46); letter-spacing: -0.28px;">$6,154.33</span></div>
<svg class="abs" style="left:1396.5px;top:466.15px" width="20" height="20" viewBox="0 0 20 20" fill="none" stroke="#ef4444" stroke-width="1.6" stroke-linejoin="round" stroke-linecap="round">
<path d="M3 1H12.6L19 7.4V17A2 2 0 0 1 17 19H3A2 2 0 0 1 1 17V3A2 2 0 0 1 3 1Z"></path><path d="M12.6 1.4V5.4A2 2 0 0 0 14.6 7.4H18.6"></path></svg>
<div class="pill" style="left:1508px;top:464px"></div>
<div class="t" style="top:460.75px;height:30px;line-height:30px;left:1523.3px;"><span class="x" style="font-size: 14.42px; font-weight: 400; color: rgb(34, 34, 34); letter-spacing: 0.38px;">Sent To</span></div>
<svg class="abs" style="left:1586px;top:468.45px" width="16" height="16" viewBox="0 0 16 16" fill="none" stroke="#ef4444" stroke-width="1.1" stroke-linecap="round" stroke-linejoin="round">
<path d="M.8 1.6C2 .6 3 .6 4.2 1.6S6.6 2.6 7.8 1.6S10.200000000000001 .6 11.4 1.6S13.6 2.4 14.4 1.8"></path>
<path d="M.8 4.8C2 3.8 3 3.8 4.2 4.8S6.6 5.8 7.8 4.8S10.200000000000001 3.8 11.4 4.8S13.6 5.6 14.4 5"></path>
<path d="M.8 8C2 7 3 7 4.2 8S6.2 8.9 7.2 8.4"></path>
<path d="M8.4 7.6L14.8 10.200000000000001L12.4 11.4L14.600000000000001 14.4L13.4 15.200000000000001L11.4 12.2L9.6 14Z" stroke-width="1"></path>
</svg>
<svg class="abs" style="left:1689px;top:465.65px" width="8" height="20" viewBox="0 0 8 20" fill="#2c7d4e"><circle cx="4" cy="4.2" r="1.6"></circle><circle cx="4" cy="10" r="1.6"></circle><circle cx="4" cy="15.8" r="1.6"></circle></svg>
<div class="cb" style="left:410px;top:524px"></div>
<div class="t" style="top:517.1px;height:30px;line-height:30px;left:447px;"><span class="x" style="font-size: 16.48px; font-weight: 400; color: rgb(34, 34, 34); -webkit-text-stroke: 0.2px; letter-spacing: 0.2px;">Bill</span></div>
<div class="t" style="top:517.1px;height:30px;line-height:30px;left:543px;"><span class="x" style="font-size: 16.48px; font-weight: 400; color: rgb(46, 46, 46); letter-spacing: 0.4px;">Jan 09, 2026</span></div>
<div class="t" style="top:517.1px;height:30px;line-height:30px;left:705.5px;"><span class="x" style="font-size: 16.48px; font-weight: 400; color: rgb(46, 46, 46); letter-spacing: 0.39px;">Jan 05, 2026</span></div>
<div class="t" style="top:517.1px;height:30px;line-height:30px;left:868.5px;"><span class="x" style="font-size: 16.48px; font-weight: 400; color: rgb(46, 46, 46); letter-spacing: 0.75px;">9389693</span></div>
<div class="t" style="top:517.1px;height:30px;line-height:30px;left:1059px;"><span class="x" style="font-size: 16.48px; font-weight: 400; color: rgb(46, 46, 46); letter-spacing: 0.29px;">Performance Foo…</span></div>
<div class="t" style="top:517.1px;height:30px;line-height:30px;right:447px;"><span class="x" style="font-size: 16.48px; font-weight: 400; color: rgb(46, 46, 46); letter-spacing: -0.35px;">$3,974.61</span></div>
<svg class="abs" style="left:1382px;top:522.9px" width="20" height="20" viewBox="0 0 20 20" fill="none" stroke="#1a1a1a" stroke-width="1.6" stroke-linejoin="round" stroke-linecap="round">
<rect x="1" y="4" width="15" height="15" rx="2.5"></rect><path d="M4.6 3.6A2.4 2.4 0 0 1 7 1H16.400000000000002A2.6 2.6 0 0 1 19 3.6V13A2.4 2.4 0 0 1 16.6 15.4"></path></svg>
<svg class="abs" style="left:1410.7px;top:522.9px" width="20" height="20" viewBox="0 0 20 20" fill="none" stroke="#ef4444" stroke-width="1.6" stroke-linejoin="round" stroke-linecap="round">
<path d="M3 1H12.6L19 7.4V17A2 2 0 0 1 17 19H3A2 2 0 0 1 1 17V3A2 2 0 0 1 3 1Z"></path><path d="M12.6 1.4V5.4A2 2 0 0 0 14.6 7.4H18.6"></path></svg>
<div class="pill" style="left:1508px;top:521px"></div>
<div class="t" style="top:518px;height:30px;line-height:30px;left:1523.3px;"><span class="x" style="font-size: 14.42px; font-weight: 400; color: rgb(34, 34, 34); letter-spacing: 0.38px;">Sent To</span></div>
<svg class="abs" style="left:1586px;top:525.7px" width="16" height="16" viewBox="0 0 16 16" fill="none" stroke="#ef4444" stroke-width="1.1" stroke-linecap="round" stroke-linejoin="round">
<path d="M.8 1.6C2 .6 3 .6 4.2 1.6S6.6 2.6 7.8 1.6S10.200000000000001 .6 11.4 1.6S13.6 2.4 14.4 1.8"></path>
<path d="M.8 4.8C2 3.8 3 3.8 4.2 4.8S6.6 5.8 7.8 4.8S10.200000000000001 3.8 11.4 4.8S13.6 5.6 14.4 5"></path>
<path d="M.8 8C2 7 3 7 4.2 8S6.2 8.9 7.2 8.4"></path>
<path d="M8.4 7.6L14.8 10.200000000000001L12.4 11.4L14.600000000000001 14.4L13.4 15.200000000000001L11.4 12.2L9.6 14Z" stroke-width="1"></path>
</svg>
<svg class="abs" style="left:1689px;top:522.9px" width="8" height="20" viewBox="0 0 8 20" fill="#2c7d4e"><circle cx="4" cy="4.2" r="1.6"></circle><circle cx="4" cy="10" r="1.6"></circle><circle cx="4" cy="15.8" r="1.6"></circle></svg>
<div class="cb" style="left:410px;top:582px"></div>
<div class="t" style="top:574.35px;height:30px;line-height:30px;left:447px;"><span class="x" style="font-size: 16.48px; font-weight: 400; color: rgb(34, 34, 34); -webkit-text-stroke: 0.2px; letter-spacing: 0.2px;">Bill</span></div>
<div class="t" style="top:574.35px;height:30px;line-height:30px;left:543px;"><span class="x" style="font-size: 16.48px; font-weight: 400; color: rgb(46, 46, 46); letter-spacing: 0.4px;">Jan 09, 2026</span></div>
<div class="t" style="top:574.35px;height:30px;line-height:30px;left:705.5px;"><span class="x" style="font-size: 16.48px; font-weight: 400; color: rgb(46, 46, 46); letter-spacing: 0.28px;">Jan 07, 2026</span></div>
<div class="t" style="top:574.35px;height:30px;line-height:30px;left:868.5px;"><span class="x" style="font-size: 16.48px; font-weight: 400; color: rgb(46, 46, 46); letter-spacing: 0.6px;">9392430</span></div>
<div class="t" style="top:574.35px;height:30px;line-height:30px;left:1059px;"><span class="x" style="font-size: 16.48px; font-weight: 400; color: rgb(46, 46, 46); letter-spacing: 0.29px;">Performance Foo…</span></div>
<div class="t" style="top:574.35px;height:30px;line-height:30px;right:447px;"><span class="x" style="font-size: 16.48px; font-weight: 400; color: rgb(46, 46, 46); letter-spacing: -0.23px;">$2,959.61</span></div>
<svg class="abs" style="left:1396.5px;top:580.65px" width="20" height="20" viewBox="0 0 20 20" fill="none" stroke="#ef4444" stroke-width="1.6" stroke-linejoin="round" stroke-linecap="round">
<path d="M3 1H12.6L19 7.4V17A2 2 0 0 1 17 19H3A2 2 0 0 1 1 17V3A2 2 0 0 1 3 1Z"></path><path d="M12.6 1.4V5.4A2 2 0 0 0 14.6 7.4H18.6"></path></svg>
<div class="pill" style="left:1508px;top:578px"></div>
<div class="t" style="top:575.25px;height:30px;line-height:30px;left:1523.3px;"><span class="x" style="font-size: 14.42px; font-weight: 400; color: rgb(34, 34, 34); letter-spacing: 0.38px;">Sent To</span></div>
<svg class="abs" style="left:1586px;top:582.95px" width="16" height="16" viewBox="0 0 16 16" fill="none" stroke="#ef4444" stroke-width="1.1" stroke-linecap="round" stroke-linejoin="round">
<path d="M.8 1.6C2 .6 3 .6 4.2 1.6S6.6 2.6 7.8 1.6S10.200000000000001 .6 11.4 1.6S13.6 2.4 14.4 1.8"></path>
<path d="M.8 4.8C2 3.8 3 3.8 4.2 4.8S6.6 5.8 7.8 4.8S10.200000000000001 3.8 11.4 4.8S13.6 5.6 14.4 5"></path>
<path d="M.8 8C2 7 3 7 4.2 8S6.2 8.9 7.2 8.4"></path>
<path d="M8.4 7.6L14.8 10.200000000000001L12.4 11.4L14.600000000000001 14.4L13.4 15.200000000000001L11.4 12.2L9.6 14Z" stroke-width="1"></path>
</svg>
<svg class="abs" style="left:1689px;top:580.15px" width="8" height="20" viewBox="0 0 8 20" fill="#2c7d4e"><circle cx="4" cy="4.2" r="1.6"></circle><circle cx="4" cy="10" r="1.6"></circle><circle cx="4" cy="15.8" r="1.6"></circle></svg>
<div class="cb" style="left:410px;top:639px"></div>
<div class="t" style="top:631.6px;height:30px;line-height:30px;left:447px;"><span class="x" style="font-size: 16.48px; font-weight: 400; color: rgb(34, 34, 34); -webkit-text-stroke: 0.2px; letter-spacing: 0.2px;">Bill</span></div>
<div class="t" style="top:631.6px;height:30px;line-height:30px;left:543px;"><span class="x" style="font-size: 16.48px; font-weight: 400; color: rgb(46, 46, 46); letter-spacing: 0.32px;">Jan 02, 2026</span></div>
<div class="t" style="top:631.6px;height:30px;line-height:30px;left:705.5px;"><span class="x" style="font-size: 16.48px; font-weight: 400; color: rgb(46, 46, 46); letter-spacing: -0.19px;">Dec 31, 2025</span></div>
<div class="t" style="top:631.6px;height:30px;line-height:30px;left:868.5px;"><span class="x" style="font-size: 16.48px; font-weight: 400; color: rgb(46, 46, 46); letter-spacing: 0.63px;">9387400</span></div>
<div class="t" style="top:631.6px;height:30px;line-height:30px;left:1059px;"><span class="x" style="font-size: 16.48px; font-weight: 400; color: rgb(46, 46, 46); letter-spacing: 0.29px;">Performance Foo…</span></div>
<div class="t" style="top:631.6px;height:30px;line-height:30px;right:447px;"><span class="x" style="font-size: 16.48px; font-weight: 400; color: rgb(46, 46, 46); letter-spacing: 0.31px;">$5,404.28</span></div>
<svg class="abs" style="left:1396.5px;top:637.9px" width="20" height="20" viewBox="0 0 20 20" fill="none" stroke="#ef4444" stroke-width="1.6" stroke-linejoin="round" stroke-linecap="round">
<path d="M3 1H12.6L19 7.4V17A2 2 0 0 1 17 19H3A2 2 0 0 1 1 17V3A2 2 0 0 1 3 1Z"></path><path d="M12.6 1.4V5.4A2 2 0 0 0 14.6 7.4H18.6"></path></svg>
<div class="pill" style="left:1508px;top:636px"></div>
<div class="t" style="top:632.5px;height:30px;line-height:30px;left:1523.3px;"><span class="x" style="font-size: 14.42px; font-weight: 400; color: rgb(34, 34, 34); letter-spacing: 0.38px;">Sent To</span></div>
<svg class="abs" style="left:1586px;top:640.2px" width="16" height="16" viewBox="0 0 16 16" fill="none" stroke="#ef4444" stroke-width="1.1" stroke-linecap="round" stroke-linejoin="round">
<path d="M.8 1.6C2 .6 3 .6 4.2 1.6S6.6 2.6 7.8 1.6S10.200000000000001 .6 11.4 1.6S13.6 2.4 14.4 1.8"></path>
<path d="M.8 4.8C2 3.8 3 3.8 4.2 4.8S6.6 5.8 7.8 4.8S10.200000000000001 3.8 11.4 4.8S13.6 5.6 14.4 5"></path>
<path d="M.8 8C2 7 3 7 4.2 8S6.2 8.9 7.2 8.4"></path>
<path d="M8.4 7.6L14.8 10.200000000000001L12.4 11.4L14.600000000000001 14.4L13.4 15.200000000000001L11.4 12.2L9.6 14Z" stroke-width="1"></path>
</svg>
<svg class="abs" style="left:1689px;top:637.4px" width="8" height="20" viewBox="0 0 8 20" fill="#2c7d4e"><circle cx="4" cy="4.2" r="1.6"></circle><circle cx="4" cy="10" r="1.6"></circle><circle cx="4" cy="15.8" r="1.6"></circle></svg>
<div class="cb" style="left:410px;top:696px"></div>
<div class="t" style="top:688.85px;height:30px;line-height:30px;left:447px;"><span class="x" style="font-size: 16.48px; font-weight: 400; color: rgb(34, 34, 34); -webkit-text-stroke: 0.2px; letter-spacing: 0.2px;">Bill</span></div>
<div class="t" style="top:688.85px;height:30px;line-height:30px;left:543px;"><span class="x" style="font-size: 16.48px; font-weight: 400; color: rgb(46, 46, 46); letter-spacing: 0.32px;">Jan 02, 2026</span></div>
<div class="t" style="top:688.85px;height:30px;line-height:30px;left:705.5px;"><span class="x" style="font-size: 16.48px; font-weight: 400; color: rgb(46, 46, 46); letter-spacing: 0.32px;">Jan 02, 2026</span></div>
<div class="t" style="top:688.85px;height:30px;line-height:30px;left:868.5px;"><span class="x" style="font-size: 16.48px; font-weight: 400; color: rgb(46, 46, 46); letter-spacing: 0.7px;">9388200</span></div>
<div class="t" style="top:688.85px;height:30px;line-height:30px;left:1059px;"><span class="x" style="font-size: 16.48px; font-weight: 400; color: rgb(46, 46, 46); letter-spacing: 0.29px;">Performance Foo…</span></div>
<div class="t" style="top:688.85px;height:30px;line-height:30px;right:447px;"><span class="x" style="font-size: 16.48px; font-weight: 400; color: rgb(46, 46, 46); letter-spacing: 0.13px;">$6,922.28</span></div>
<svg class="abs" style="left:1396.5px;top:695.15px" width="20" height="20" viewBox="0 0 20 20" fill="none" stroke="#ef4444" stroke-width="1.6" stroke-linejoin="round" stroke-linecap="round">
<path d="M3 1H12.6L19 7.4V17A2 2 0 0 1 17 19H3A2 2 0 0 1 1 17V3A2 2 0 0 1 3 1Z"></path><path d="M12.6 1.4V5.4A2 2 0 0 0 14.6 7.4H18.6"></path></svg>
<div class="pill" style="left:1508px;top:693px"></div>
<div class="t" style="top:689.75px;height:30px;line-height:30px;left:1523.3px;"><span class="x" style="font-size: 14.42px; font-weight: 400; color: rgb(34, 34, 34); letter-spacing: 0.38px;">Sent To</span></div>
<svg class="abs" style="left:1586px;top:697.45px" width="16" height="16" viewBox="0 0 16 16" fill="none" stroke="#ef4444" stroke-width="1.1" stroke-linecap="round" stroke-linejoin="round">
<path d="M.8 1.6C2 .6 3 .6 4.2 1.6S6.6 2.6 7.8 1.6S10.200000000000001 .6 11.4 1.6S13.6 2.4 14.4 1.8"></path>
<path d="M.8 4.8C2 3.8 3 3.8 4.2 4.8S6.6 5.8 7.8 4.8S10.200000000000001 3.8 11.4 4.8S13.6 5.6 14.4 5"></path>
<path d="M.8 8C2 7 3 7 4.2 8S6.2 8.9 7.2 8.4"></path>
<path d="M8.4 7.6L14.8 10.200000000000001L12.4 11.4L14.600000000000001 14.4L13.4 15.200000000000001L11.4 12.2L9.6 14Z" stroke-width="1"></path>
</svg>
<svg class="abs" style="left:1689px;top:694.65px" width="8" height="20" viewBox="0 0 8 20" fill="#2c7d4e"><circle cx="4" cy="4.2" r="1.6"></circle><circle cx="4" cy="10" r="1.6"></circle><circle cx="4" cy="15.8" r="1.6"></circle></svg>
<div class="cb" style="left:410px;top:753px"></div>
<div class="t" style="top:746.1px;height:30px;line-height:30px;left:447px;"><span class="x" style="font-size: 16.48px; font-weight: 400; color: rgb(34, 34, 34); -webkit-text-stroke: 0.2px; letter-spacing: 0.2px;">Bill</span></div>
<div class="t" style="top:746.1px;height:30px;line-height:30px;left:543px;"><span class="x" style="font-size: 16.48px; font-weight: 400; color: rgb(46, 46, 46); letter-spacing: 0.22px;">Dec 30, 2025</span></div>
<div class="t" style="top:746.1px;height:30px;line-height:30px;left:705.5px;"><span class="x" style="font-size: 16.48px; font-weight: 400; color: rgb(46, 46, 46); letter-spacing: 0.21px;">Dec 29, 2025</span></div>
<div class="t" style="top:746.1px;height:30px;line-height:30px;left:868.5px;"><span class="x" style="font-size: 16.48px; font-weight: 400; color: rgb(46, 46, 46); letter-spacing: 0.63px;">9385303</span></div>
<div class="t" style="top:746.1px;height:30px;line-height:30px;left:1059px;"><span class="x" style="font-size: 16.48px; font-weight: 400; color: rgb(46, 46, 46); letter-spacing: 0.29px;">Performance Foo…</span></div>
<div class="t" style="top:746.1px;height:30px;line-height:30px;right:447px;"><span class="x" style="font-size: 16.48px; font-weight: 400; color: rgb(46, 46, 46); letter-spacing: -0.41px;">$3,124.82</span></div>
<svg class="abs" style="left:1396.5px;top:752.4px" width="20" height="20" viewBox="0 0 20 20" fill="none" stroke="#ef4444" stroke-width="1.6" stroke-linejoin="round" stroke-linecap="round">
<path d="M3 1H12.6L19 7.4V17A2 2 0 0 1 17 19H3A2 2 0 0 1 1 17V3A2 2 0 0 1 3 1Z"></path><path d="M12.6 1.4V5.4A2 2 0 0 0 14.6 7.4H18.6"></path></svg>
<div class="pill" style="left:1508px;top:750px"></div>
<div class="t" style="top:747px;height:30px;line-height:30px;left:1523.3px;"><span class="x" style="font-size: 14.42px; font-weight: 400; color: rgb(34, 34, 34); letter-spacing: 0.38px;">Sent To</span></div>
<svg class="abs" style="left:1586px;top:754.7px" width="16" height="16" viewBox="0 0 16 16" fill="none" stroke="#ef4444" stroke-width="1.1" stroke-linecap="round" stroke-linejoin="round">
<path d="M.8 1.6C2 .6 3 .6 4.2 1.6S6.6 2.6 7.8 1.6S10.200000000000001 .6 11.4 1.6S13.6 2.4 14.4 1.8"></path>
<path d="M.8 4.8C2 3.8 3 3.8 4.2 4.8S6.6 5.8 7.8 4.8S10.200000000000001 3.8 11.4 4.8S13.6 5.6 14.4 5"></path>
<path d="M.8 8C2 7 3 7 4.2 8S6.2 8.9 7.2 8.4"></path>
<path d="M8.4 7.6L14.8 10.200000000000001L12.4 11.4L14.600000000000001 14.4L13.4 15.200000000000001L11.4 12.2L9.6 14Z" stroke-width="1"></path>
</svg>
<svg class="abs" style="left:1689px;top:751.9px" width="8" height="20" viewBox="0 0 8 20" fill="#2c7d4e"><circle cx="4" cy="4.2" r="1.6"></circle><circle cx="4" cy="10" r="1.6"></circle><circle cx="4" cy="15.8" r="1.6"></circle></svg>
<div class="cb" style="left:410px;top:811px"></div>
<div class="t" style="top:803.35px;height:30px;line-height:30px;left:447px;"><span class="x" style="font-size: 16.48px; font-weight: 400; color: rgb(34, 34, 34); -webkit-text-stroke: 0.2px; letter-spacing: 0.2px;">Bill</span></div>
<div class="t" style="top:803.35px;height:30px;line-height:30px;left:543px;"><span class="x" style="font-size: 16.48px; font-weight: 400; color: rgb(46, 46, 46); letter-spacing: 0.22px;">Dec 30, 2025</span></div>
<div class="t" style="top:803.35px;height:30px;line-height:30px;left:705.5px;"><span class="x" style="font-size: 16.48px; font-weight: 400; color: rgb(46, 46, 46); letter-spacing: 0.21px;">Dec 28, 2025</span></div>
<div class="t" style="top:803.35px;height:30px;line-height:30px;left:868.5px;"><span class="x" style="font-size: 16.48px; font-weight: 400; color: rgb(46, 46, 46); letter-spacing: -0.01px;">9385120</span></div>
<div class="t" style="top:803.35px;height:30px;line-height:30px;left:1059px;"><span class="x" style="font-size: 16.48px; font-weight: 400; color: rgb(46, 46, 46); letter-spacing: 0.29px;">Performance Foo…</span></div>
<div class="t" style="top:803.35px;height:30px;line-height:30px;right:447px;"><span class="x" style="font-size: 16.48px; font-weight: 400; color: rgb(46, 46, 46); letter-spacing: -0.39px;">$2,871.40</span></div>
<svg class="abs" style="left:1396.5px;top:809.65px" width="20" height="20" viewBox="0 0 20 20" fill="none" stroke="#ef4444" stroke-width="1.6" stroke-linejoin="round" stroke-linecap="round">
<path d="M3 1H12.6L19 7.4V17A2 2 0 0 1 17 19H3A2 2 0 0 1 1 17V3A2 2 0 0 1 3 1Z"></path><path d="M12.6 1.4V5.4A2 2 0 0 0 14.6 7.4H18.6"></path></svg>
<div class="pill" style="left:1508px;top:807px"></div>
<div class="t" style="top:804.25px;height:30px;line-height:30px;left:1523.3px;"><span class="x" style="font-size: 14.42px; font-weight: 400; color: rgb(34, 34, 34); letter-spacing: 0.38px;">Sent To</span></div>
<svg class="abs" style="left:1586px;top:811.95px" width="16" height="16" viewBox="0 0 16 16" fill="none" stroke="#ef4444" stroke-width="1.1" stroke-linecap="round" stroke-linejoin="round">
<path d="M.8 1.6C2 .6 3 .6 4.2 1.6S6.6 2.6 7.8 1.6S10.200000000000001 .6 11.4 1.6S13.6 2.4 14.4 1.8"></path>
<path d="M.8 4.8C2 3.8 3 3.8 4.2 4.8S6.6 5.8 7.8 4.8S10.200000000000001 3.8 11.4 4.8S13.6 5.6 14.4 5"></path>
<path d="M.8 8C2 7 3 7 4.2 8S6.2 8.9 7.2 8.4"></path>
<path d="M8.4 7.6L14.8 10.200000000000001L12.4 11.4L14.600000000000001 14.4L13.4 15.200000000000001L11.4 12.2L9.6 14Z" stroke-width="1"></path>
</svg>
<svg class="abs" style="left:1689px;top:809.15px" width="8" height="20" viewBox="0 0 8 20" fill="#2c7d4e"><circle cx="4" cy="4.2" r="1.6"></circle><circle cx="4" cy="10" r="1.6"></circle><circle cx="4" cy="15.8" r="1.6"></circle></svg>
</div>
<div class="abs" style="left:1750.5px;top:276px;width:13.5px;height:519px;background:#f1f1f2"></div>
<div class="abs" style="left:1754px;top:290.5px;width:7px;height:103px;border-radius:4px;background:#e2e8f1"></div>
<svg class="abs" style="left:1752.5px;top:279px" width="10" height="8" viewBox="0 0 10 8"><path d="M5 1L9.4 7H.6Z" fill="#dfe6f1"></path></svg>
<div class="abs" id="footer"></div>
<div class="t" style="top:804.8px;height:30px;line-height:30px;left:825px;"><span class="x" style="font-size: 15.45px; font-weight: 400; color: rgb(255, 255, 255); letter-spacing: 0.28px;">Records Per Page</span></div>
<div class="abs" style="left:970px;top:809.2px;width:103px;height:26.8px;border-radius:5px;background:#fff"></div>
<div class="t" style="top:807.4px;height:30px;line-height:30px;left:988px;"><span class="x" style="font-size: 16.48px; font-weight: 400; color: rgb(0, 0, 0); letter-spacing: -0.83px;">100</span></div>
<svg class="abs" style="left:1043.8px;top:814.4px" width="16" height="16" viewBox="-8 -8 16 16" fill="none" stroke="#000" stroke-width="1.9" stroke-linecap="round" stroke-linejoin="round"><path d="M-5 -2.9L0 2.9L5 -2.9"></path></svg>
<div class="t" style="top:804.8px;height:30px;line-height:30px;left:1086.5px;"><span class="x" style="font-size: 15.45px; font-weight: 400; color: rgb(255, 255, 255); -webkit-text-stroke: 0.2px; letter-spacing: 0.54px;">1-45 of 45</span></div>
<svg class="abs" style="left:1177px;top:812px" width="22" height="16" viewBox="0 0 22 16" fill="none" stroke="#b3d1c0" stroke-width="1.5" stroke-linecap="round" stroke-linejoin="round"><path d="M1.6 1.4V14.6M20.4 8H6.4M11.4 3L6.4 8L11.4 13"></path></svg>
<svg class="abs" style="left:1224px;top:812px" width="12" height="16" viewBox="0 0 12 16" fill="none" stroke="#b3d1c0" stroke-width="1.5" stroke-linecap="round" stroke-linejoin="round"><path d="M9 2L3.4 8L9 14"></path></svg>
<svg class="abs" style="left:1265.6px;top:812px" width="12" height="16" viewBox="0 0 12 16" fill="none" stroke="#b3d1c0" stroke-width="1.5" stroke-linecap="round" stroke-linejoin="round"><path d="M3 2L8.6 8L3 14"></path></svg>
<svg class="abs" style="left:1303px;top:812px" width="22" height="16" viewBox="0 0 22 16" fill="none" stroke="#b3d1c0" stroke-width="1.5" stroke-linecap="round" stroke-linejoin="round"><path d="M20.4 1.4V14.6M1.6 8H15.6M10.6 3L15.6 8L10.600000000000001 13"></path></svg>
<div class="abs" style="left:0;top:0;width:6px;height:853px;background:linear-gradient(90deg,rgba(0,0,0,.09),rgba(0,0,0,.02) 60%,rgba(0,0,0,0))"></div>


</body></html>
